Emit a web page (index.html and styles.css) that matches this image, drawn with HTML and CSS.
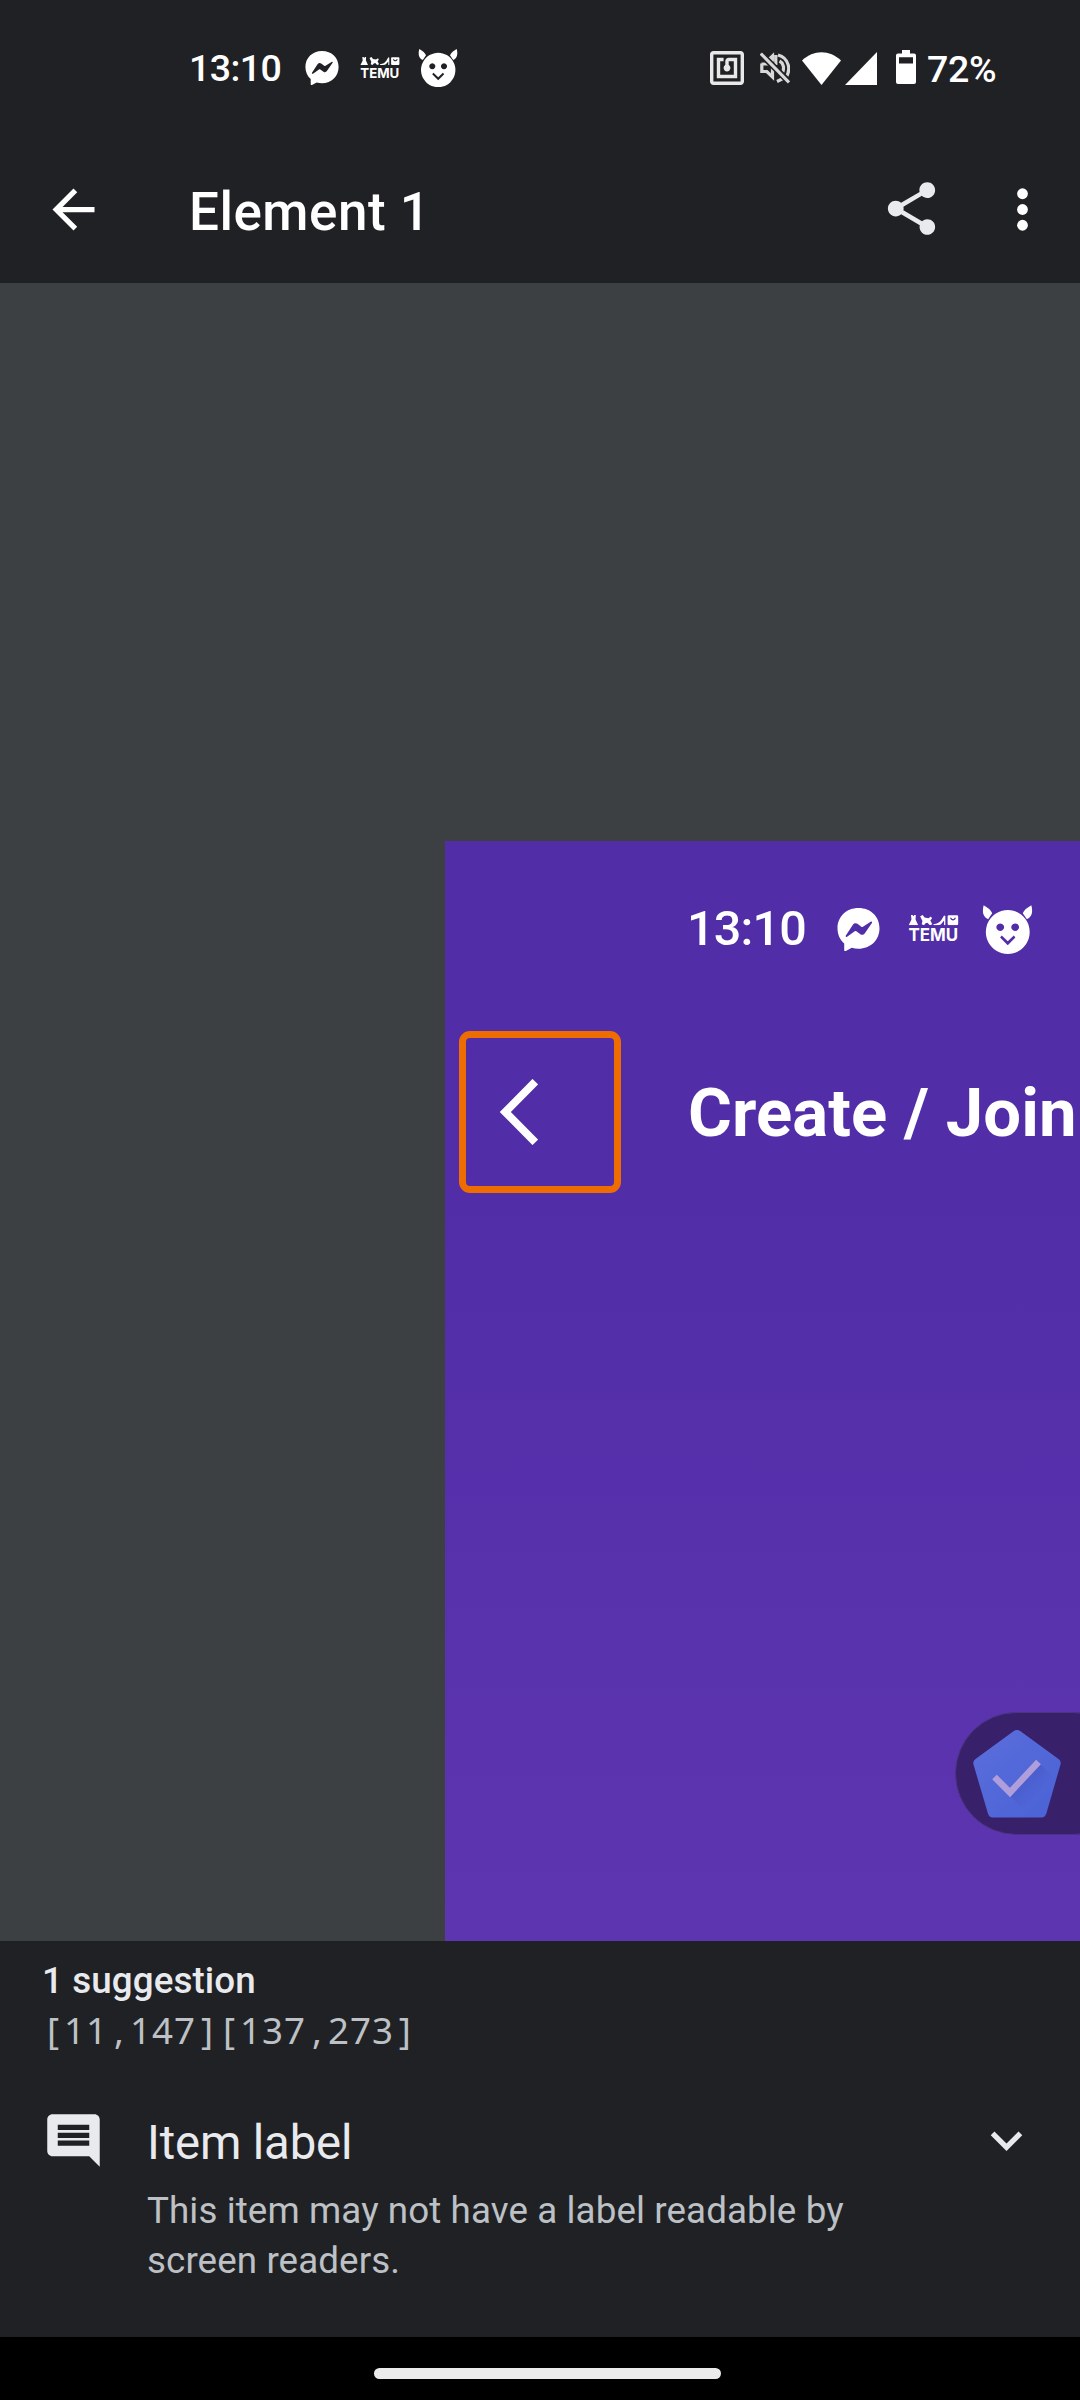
FILE: index.html
```html
<!DOCTYPE html>
<html lang="en">
<head>
<meta charset="utf-8">
<title>Element 1</title>
<link rel="stylesheet" href="styles.css">
</head>
<body>
<svg class="defs" width="0" height="0" aria-hidden="true">
  <symbol id="messenger" viewBox="0 0 34 34">
    <path fill="currentColor" fill-rule="evenodd" d="M17 0C7.4 0 .4 6.800 .4 16c0 5 2 9.200 5.300 12v5.200c0 .8.7 1.100 1.300.8l4.700-2.500c1.700.5 3.400.7 5.300.7 9.600 0 16.600-6.900 16.600-16.200S26.600 0 17 0ZM7 21.800l5.700-8.700c.9-1.200 2.300-1.500 3.500-.6l3 2.300c.4.300.9.300 1.300 0l6.100-3.900c.8-.5 1.400.2 1 .9l-5.700 8.300c-.8 1.200-2.300 1.500-3.400.6l-3.200-2.300c-.4-.3-.9-.3-1.300 0L8 22.700c-.8.500-1.400-.2-1-.9Z"/>
  </symbol>
  <symbol id="goods" viewBox="0 0 40 8">
    <g fill="currentColor">
      <path d="M2.300 0h1.200l.7 1 .7-1h1.200L5.900 3.500 8 8H.5l2.200-4.500Z"/>
      <path d="M9.500 1l2-1 1.500 2 3 .5 2-1.300.8 1.600-1.300 1.500 1.600 3-2 .7-1.800-2-1.500.4-1.300 1.600-1.800-.7.600-2.500Z"/>
      <path d="M20 7.300c3-.3 5-1.500 6.300-3.500L28.300.3l1 .5V8h-1V4.400l-2.200 2.600c-1 1-3.200 1.200-6.100 1Z"/>
      <path fill-rule="evenodd" d="M32 .2h6.500q.9 0 .9.900v6q0 .9-.9.900H32q-.9 0-.9-.9v-6q0-.9.9-.9Zm1 2c.6 2.700 4 2.700 4.600 0h-1c-.4 1.300-2.200 1.300-2.600 0Z"/>
    </g>
  </symbol>
  <symbol id="devil" viewBox="0 0 40 38">
    <path fill="currentColor" d="M1.300 0C4.700 2 7.300 4 8 6.300L4.800 11C.6 9 0 5 1.300 0ZM38.700 0C35.300 2 32.700 4 32 6.300l3.200 4.700C39.400 9 40 5 38.700 0Z"/>
    <path fill="currentColor" fill-rule="evenodd" d="M20.200 3.800a17.200 17.200 0 1 0 .01 0ZM14.300 14.200a3 3 0 1 1-.01 0ZM26 14.200a3 3 0 1 1-.01 0ZM15.500 23.800l4.700 4.500 4.700-4.500 1.300 1.500-6 6-6-6Z"/>
  </symbol>
</svg>

<main class="screen">
  <header class="top">
    <div class="status">
      <div class="status-left">
        <span class="clock">13:10</span>
        <svg class="messenger"><use href="#messenger"/></svg>
        <svg class="temu" viewBox="0 0 40 22"><use href="#goods" width="40" height="8"/><text class="temu-text" x=".3" y="20.800" textLength="39" lengthAdjust="spacingAndGlyphs">TEMU</text></svg>
        <svg class="devil"><use href="#devil"/></svg>
      </div>
      <div class="status-right">
        <svg class="nfc" viewBox="2 2 20 20"><path fill="currentColor" d="M20 2H4c-1.100 0-2 .9-2 2v16c0 1.100.9 2 2 2h16c1.100 0 2-.9 2-2V4c0-1.100-.9-2-2-2zm0 18H4V4h16v16zM18 6h-5c-1.100 0-2 .9-2 2v2.280c-.6.350-1 .98-1 1.720 0 1.100.9 2 2 2s2-.9 2-2c0-.74-.4-1.380-1-1.720V8h3v8H8V8h2V6H6v12h12V6z"/></svg>
        <svg class="mute" viewBox="0 0 30 32"><g fill="none" stroke="currentColor" stroke-width="3.200"><path d="M1.800 11.500v8h5l5.700 5.500v-9M1.500 12h7M8 11.500l4.500-3V4l-3 3M15.800 3v10M18 3c11 3 13.500 15 7.500 23M19.500 9c4 2 5 7 3 11.500M17 29.500l5.500-2.700"/></g><path d="M1 2l28 28" stroke="#202124" stroke-width="6.400"/><path d="M.8 1.500l28.200 29" stroke="currentColor" stroke-width="3.200"/></svg>
        <svg class="wifi" viewBox="0 0 39 33"><path fill="currentColor" d="M0 8.500C11.500-2.500 27.500-2.500 39 8.500L19.500 33Z"/></svg>
        <svg class="signal" viewBox="0 0 32 33"><path fill="currentColor" d="M32 0v33H0Z"/></svg>
        <svg class="battery" viewBox="0 0 20 34"><path fill="currentColor" fill-rule="evenodd" d="M6 0h8v3.500h4q2 0 2 2V32q0 2-2 2H2q-2 0-2-2V5.500q0-2 2-2h4ZM3 7.300v6.200h14V7.300Z"/></svg>
        <span class="percent">72%</span>
      </div>
    </div>
    <div class="appbar">
      <svg class="icon back" viewBox="0 0 24 24"><path fill="#fff" d="M20 11H7.830l5.590-5.590L12 4l-8 8 8 8 1.410-1.410L7.830 13H20v-2z"/></svg>
      <h1 class="title">Element 1</h1>
      <svg class="icon share" viewBox="0 0 24 24"><path fill="#e8eaed" d="M18 16.080c-.76 0-1.440.3-1.960.77L8.910 12.700c.05-.23.09-.46.09-.7s-.04-.47-.09-.7l7.050-4.110c.54.500 1.250.81 2.040.81 1.660 0 3-1.340 3-3s-1.340-3-3-3-3 1.340-3 3c0 .24.04.47.09.7L8.040 9.810C7.500 9.310 6.790 9 6 9c-1.660 0-3 1.340-3 3s1.340 3 3 3c.79 0 1.500-.31 2.040-.81l7.120 4.160c-.05.21-.08.43-.08.65 0 1.610 1.310 3 2.920 3s3-1.310 3-3-1.310-2.920-3-2.920z"/></svg>
      <svg class="icon more" viewBox="0 0 24 24"><g fill="#fff"><circle cx="12" cy="6" r="2.050"/><circle cx="12" cy="12" r="2.050"/><circle cx="12" cy="18" r="2.050"/></g></svg>
    </div>
  </header>

  <section class="canvas">
    <div class="preview">
      <div class="preview-status">
        <span class="preview-clock">13:10</span>
        <svg class="preview-messenger"><use href="#messenger"/></svg>
        <svg class="preview-temu" viewBox="0 0 40 22"><use href="#goods" width="40" height="8"/><text class="temu-text" x=".3" y="20.800" textLength="39" lengthAdjust="spacingAndGlyphs">TEMU</text></svg>
        <svg class="preview-devil"><use href="#devil"/></svg>
      </div>
      <div class="preview-bar">
        <div class="highlight"><svg class="chevron" viewBox="0 0 38 66"><path d="M35.300 2.700L5.300 33l30 30.300" fill="none" stroke="#fff" stroke-width="7.900"/></svg></div>
        <span class="preview-title">Create / Join</span>
      </div>
    </div>
    <div class="bubble">
      <svg class="badge" viewBox="0 0 88 88">
        <defs>
          <linearGradient id="fill" x1="0" y1="0" x2="1" y2="1"><stop offset="0" stop-color="#5b6edb"/><stop offset="1" stop-color="#4a62d6"/></linearGradient>
          <linearGradient id="shade" gradientUnits="userSpaceOnUse" x1="45" y1="50" x2="62" y2="67"><stop offset="0" stop-color="#3f50bd" stop-opacity=".5"/><stop offset="1" stop-color="#3f50bd" stop-opacity="0"/></linearGradient>
        </defs>
        <path fill="url(#fill)" d="M40.500 1.200q3.500-2.400 7 0L85.500 29q3 2.200 2 5.500L73.500 83q-1.500 4.500-5 4.500H20q-4 0-5.200-4.500L.5 34.500q-1-3.300 2-5.500Z"/>
        <path fill="url(#shade)" d="M37 66L67 34l13 13-9 40H58Z"/>
        <path d="M21.500 47L37 62.500 65.500 32" fill="none" stroke="#b09edb" stroke-width="6.500"/>
      </svg>
    </div>
  </section>

  <section class="panel">
    <h2 class="count">1 suggestion</h2>
    <p class="bounds"><span>[</span>11<span>,</span>147<span>]</span><span>[</span>137<span>,</span>273<span>]</span></p>
    <div class="item">
      <svg class="icon" viewBox="0 0 24 24"><path fill="#e8eaed" d="M21.990 4c0-1.100-.89-2-1.990-2H4c-1.100 0-2 .9-2 2v12c0 1.100.9 2 2 2h14l4 4-.01-18zM18 14H6v-2h12v2zm0-3H6V9h12v2zm0-3H6V6h12v2z"/></svg>
      <div class="item-body">
        <h3 class="item-title">Item label</h3>
        <p class="item-text">This item may not have a label readable by<br>screen readers.</p>
      </div>
      <svg class="icon expand" viewBox="0 0 24 24"><path fill="#e8eaed" d="M16.590 8.590L12 13.170 7.410 8.590 6 10l6 6 6-6z"/></svg>
    </div>
  </section>
  <footer class="nav"><div class="handle"></div></footer>
</main>
</body>
</html>
```
FILE: styles.css
```css
* { box-sizing: border-box; }
body, h1, h2, h3, p { margin: 0; }
body { background: #000; font-family: Roboto, "Liberation Sans", sans-serif; }
svg { display: block; flex: none; }
.defs { position: absolute; }
.temu-text { fill: currentColor; font: 700 13.500px Inter, sans-serif; }

.screen { display: flex; flex-direction: column; width: 1080px; height: 2400px; overflow: hidden; }

.top { flex: none; height: 283px; background: #202124; color: #fff; }
.status { display: flex; justify-content: space-between; height: 136px; padding: 0 84px 0 189px; }
.status-left, .status-right { display: flex; align-items: center; color: #fff; }
.clock { width: 116px; font-size: 37.500px; font-weight: 500; line-height: 40px; letter-spacing: -.6px; white-space: nowrap; }
.messenger { width: 34px; height: 34px; margin-right: 21px; }
.temu { width: 40px; height: 22px; margin-right: 18px; }
.devil { width: 40px; height: 38px; }
.nfc { width: 34px; height: 34px; margin-right: 16px; color: #e8e8e8; }
.mute { width: 30px; height: 32px; margin-right: 12px; color: #d8d8d9; }
.wifi { width: 39px; height: 33px; margin-right: 4px; }
.signal { width: 32px; height: 33px; margin-right: 19px; }
.battery { width: 20px; height: 34px; margin: -2px 11px 0 0; }
.percent { width: 69px; padding-top: 2px; font-size: 37.500px; font-weight: 500; line-height: 40px; letter-spacing: -.3px; white-space: nowrap; }

.icon { width: 63px; height: 63px; }
.appbar { display: flex; align-items: center; height: 147px; padding: 0 26px 0 42px; }
.title { flex: 1; margin-left: 84px; padding-top: 5px; font-size: 53px; font-weight: 500; line-height: 60px; letter-spacing: .5px; }
.share { margin: -2px 48px 0 0; }

.canvas { position: relative; flex: none; display: flex; justify-content: flex-end; align-items: flex-end; height: 1658px; background: #3c4043; overflow: hidden; }
.preview { width: 635px; height: 1100px; overflow: hidden; color: #fff; background: linear-gradient(#512da8 0%, #512da8 32%, #5e35b1 100%); }
.preview-status { display: flex; align-items: center; height: 176px; padding-left: 242px; }
.preview-clock { width: 150px; font-size: 48.500px; font-weight: 500; line-height: 56px; letter-spacing: -.8px; }
.preview-messenger { width: 43px; height: 43px; margin-right: 28px; }
.preview-temu { width: 51px; height: 28px; margin-right: 23px; }
.preview-devil { width: 51px; height: 49px; }
.preview-bar { display: flex; align-items: center; height: 190px; padding: 0 0 0 14px; }
.highlight { flex: none; display: flex; align-items: center; width: 162px; height: 162px; padding-left: 34px; border: 7px solid #ef6c00; border-radius: 11px; }
.chevron { width: 38px; height: 66px; margin-top: -1px; }
.preview-title { margin-left: 67px; padding-top: 1px; font-size: 67px; font-weight: 700; line-height: 76px; letter-spacing: .1px; white-space: nowrap; }

.bubble { position: absolute; left: 955px; top: 1429px; width: 180px; height: 123px; padding: 17px; border: 1px solid #4b3482; border-radius: 62px; background: #38206a; }
.badge { width: 88px; height: 88px; }

.panel { flex: none; height: 396px; padding: 18px 26px 0 42px; background: #202124; color: #e8eaed; }
.count { font-size: 36.750px; font-weight: 500; line-height: 43px; letter-spacing: .1px; }
.bounds { display: flex; margin-left: 0; color: #bdc1c6; font-family: "Noto Sans", sans-serif; font-size: 36.700px; line-height: 50px; letter-spacing: 1px; margin-top: 3px; }
.bounds span { width: 22px; text-align: center; letter-spacing: 0; }
.item { display: flex; align-items: flex-start; margin-top: 54px; }
.item-body { flex: 1; margin-left: 42px; }
.item-title { padding-top: 6px; font-size: 47.250px; font-weight: 400; line-height: 56px; letter-spacing: -.15px; }
.item-text { margin-top: 15px; color: #bdc1c6; font-size: 36.750px; line-height: 50px; letter-spacing: .1px; }
.expand { margin-right: 16px; margin-left: 20px; }

.nav { flex: none; display: flex; justify-content: center; height: 63px; padding-top: 31px; background: #000; }
.handle { width: 347px; height: 11px; margin-left: 15px; border-radius: 6px; background: #ebebeb; }
```
